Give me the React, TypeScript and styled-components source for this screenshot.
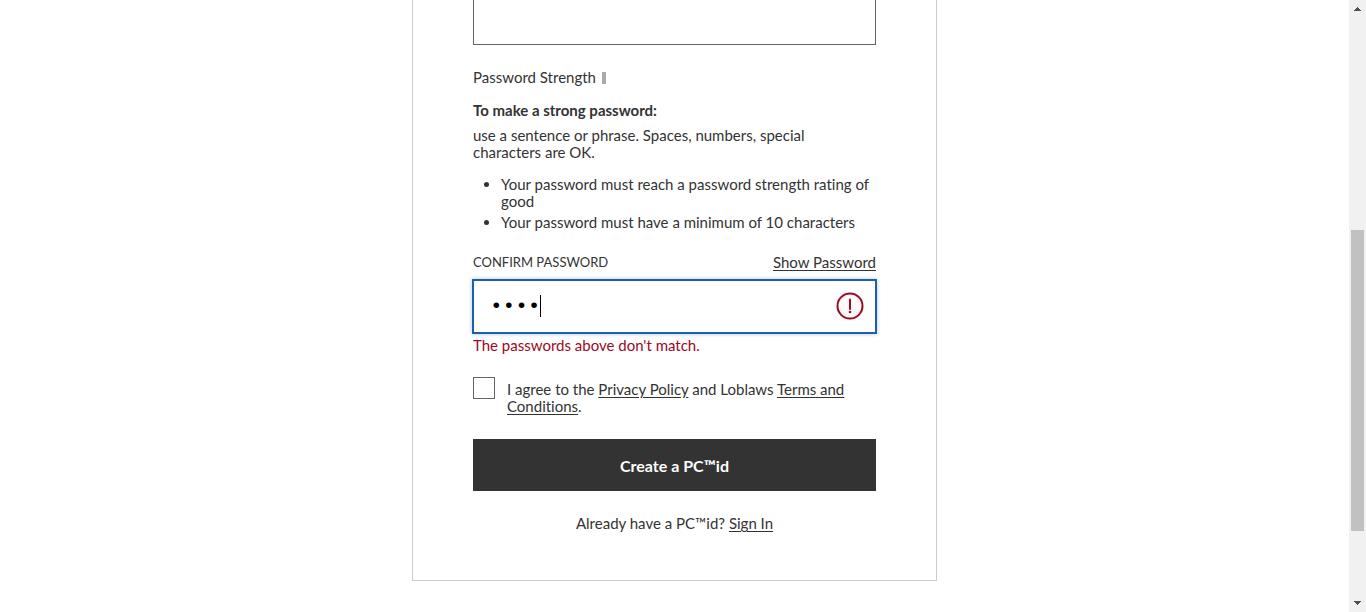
import React, { useState } from "react";
import styled, { createGlobalStyle, css } from "styled-components";

const ink = "#333333";
const danger = "#9b0a24";

const GlobalStyle = createGlobalStyle`
  *, *::before, *::after { box-sizing: border-box; }
  body {
    margin: 0;
    background: #ffffff;
    color: ${ink};
    font-family: Lato, "Open Sans", sans-serif;
    font-size: 15px;
    font-variant-ligatures: none;
    line-height: 17px;
  }
`;

const Page = styled.div`
  display: flex;
  height: 100vh;
  overflow: hidden;
`;

const Main = styled.main`
  flex: 1;
  min-width: 0;
`;

const Card = styled.form`
  max-width: 525px;
  margin: 0 auto;
  padding: 0 60px 48px;
  border: 1px solid #cccccc;
  border-top: 0;
`;

const fieldBase = css`
  display: block;
  width: 100%;
  background: #ffffff;
  border-radius: 0;
  outline: none;
`;

const PasswordInput = styled.input`
  ${fieldBase}
  height: 45px;
  border: 1px solid #666666;
  border-top: 0;
  padding: 0 20px;
`;

const Strength = styled.div`
  display: flex;
  align-items: center;
  gap: 6px;
  margin-top: 24px;
`;

const StrengthBar = styled.span`
  width: 4px;
  height: 12px;
  background: #aaaaaa;
`;

const Tips = styled.section`
  margin-top: 16px;
`;

const TipsTitle = styled.h2`
  margin: 0 0 8px;
  font-size: 15px;
  line-height: 17px;
  font-weight: 700;
`;

const TipsText = styled.p`
  margin: 0 60px 15px 0;
`;

const Rules = styled.ul`
  margin: 0;
  padding: 0 0 0 28px;
`;

const Rule = styled.li`
  margin-bottom: 4px;
`;

const LabelRow = styled.div`
  display: flex;
  justify-content: space-between;
  align-items: center;
  margin: 23px 0 8px;
`;

const FieldLabel = styled.label`
  font-size: 13px;
  text-transform: uppercase;
`;

const TextButton = styled.button`
  padding: 0;
  border: 0;
  background: none;
  color: inherit;
  font: inherit;
  text-decoration: underline;
  text-underline-offset: 2px;
`;

const Field = styled.div`
  position: relative;
  margin: 0 -1px;
`;

const ConfirmInput = styled.input`
  ${fieldBase}
  height: 55px;
  padding: 0 60px 0 16px;
  border: 2px solid #1f5fa8;
  box-shadow: 0 0 4px #a8c6ea;
  color: #000000;
  font-family: "Liberation Mono", monospace;
  font-size: 21px;
  caret-color: transparent;
`;

const Caret = styled.span`
  position: absolute;
  top: 16px;
  left: 68px;
  width: 1px;
  height: 22px;
  background: #000000;
`;

const AlertIcon = styled.svg`
  position: absolute;
  top: 13px;
  right: 13px;
  width: 28px;
  height: 28px;
`;

const ErrorText = styled.p`
  margin: 3px 0 0;
  color: ${danger};
`;

const Agreement = styled.div`
  display: flex;
  align-items: flex-start;
  gap: 12px;
  margin-top: 23px;
`;

const CheckBox = styled.input`
  appearance: none;
  flex: none;
  width: 22px;
  height: 22px;
  margin: 0;
  border: 1px solid #666666;
  background: #ffffff;
  &:checked { background: ${ink}; }
`;

const AgreementLabel = styled.label`
  margin: 4px 30px 0 0;
`;

const Link = styled.a`
  color: inherit;
  text-underline-offset: 2px;
`;

const Submit = styled.button`
  display: block;
  width: 100%;
  height: 52px;
  margin-top: 24px;
  border: 0;
  background: ${ink};
  color: #ffffff;
  font: inherit;
  font-size: 16px;
  font-weight: 700;
`;

const SignIn = styled.p`
  margin: 24px 0 0;
  text-align: center;
`;

const ScrollBar = styled.div`
  flex: none;
  display: flex;
  flex-direction: column;
  width: 17px;
  background: #f1f1f1;
`;

const ScrollArrow = styled.svg`
  flex: none;
  width: 17px;
  height: 17px;
`;

const ScrollTrack = styled.div`
  flex: 1;
  display: flex;
  flex-direction: column;
  padding: 0 2px;
`;

const TrackSpace = styled.div<{ $share: number }>`
  flex: ${(p) => p.$share} 0 0;
`;

const ScrollThumb = styled(TrackSpace)`
  background: #c1c1c1;
`;

export default function App() {
  const [confirm, setConfirm] = useState("pass");
  const [shown, setShown] = useState(false);
  return (
    <Page>
      <GlobalStyle />
      <Main>
        <Card onSubmit={(e) => e.preventDefault()}>
          <PasswordInput type="password" aria-label="Password" />
          <Strength>
            <span>Password Strength</span>
            <StrengthBar />
          </Strength>
          <Tips>
            <TipsTitle>To make a strong password:</TipsTitle>
            <TipsText>
              use a sentence or phrase. Spaces, numbers, special characters are OK.
            </TipsText>
            <Rules>
              <Rule>Your password must reach a password strength rating of good</Rule>
              <Rule>Your password must have a minimum of 10 characters</Rule>
            </Rules>
          </Tips>
          <LabelRow>
            <FieldLabel htmlFor="confirm">Confirm Password</FieldLabel>
            <TextButton type="button" onClick={() => setShown(!shown)}>
              Show Password
            </TextButton>
          </LabelRow>
          <Field>
            <ConfirmInput
              id="confirm"
              type={shown ? "text" : "password"}
              value={confirm}
              onChange={(e) => setConfirm(e.target.value)}
              aria-invalid="true"
              aria-describedby="confirm-error"
            />
            <Caret />
            <AlertIcon viewBox="0 0 28 28" aria-hidden="true">
              <circle cx="14" cy="14" r="12.5" fill="#fffafa" stroke={danger} strokeWidth="2" />
              <path d="M14 7.5v9.5" stroke={danger} strokeWidth="2" strokeLinecap="round" />
              <circle cx="14" cy="20" r="1.3" fill={danger} />
            </AlertIcon>
          </Field>
          <ErrorText id="confirm-error">The passwords above don't match.</ErrorText>
          <Agreement>
            <CheckBox type="checkbox" id="agree" />
            <AgreementLabel htmlFor="agree">
              I agree to the <Link href="#privacy">Privacy Policy</Link> and Loblaws{" "}
              <Link href="#terms">Terms and Conditions</Link>.
            </AgreementLabel>
          </Agreement>
          <Submit type="submit">Create a PC™id</Submit>
          <SignIn>
            Already have a PC™id? <Link href="#sign-in">Sign In</Link>
          </SignIn>
        </Card>
      </Main>
      <ScrollBar aria-hidden="true">
        <ScrollArrow viewBox="0 0 17 17">
          <path d="M8 7h1v1h1v1h1v1h1v1H5v-1h1V9h1V8h1z" fill="#505050" />
        </ScrollArrow>
        <ScrollTrack>
          <TrackSpace $share={213} />
          <ScrollThumb $share={301} />
          <TrackSpace $share={64} />
        </ScrollTrack>
        <ScrollArrow viewBox="0 0 17 17">
          <path d="M5 6h7v1h-1v1h-1v1H9v1H8V9H7V8H6V7H5z" fill="#505050" />
        </ScrollArrow>
      </ScrollBar>
    </Page>
  );
}
